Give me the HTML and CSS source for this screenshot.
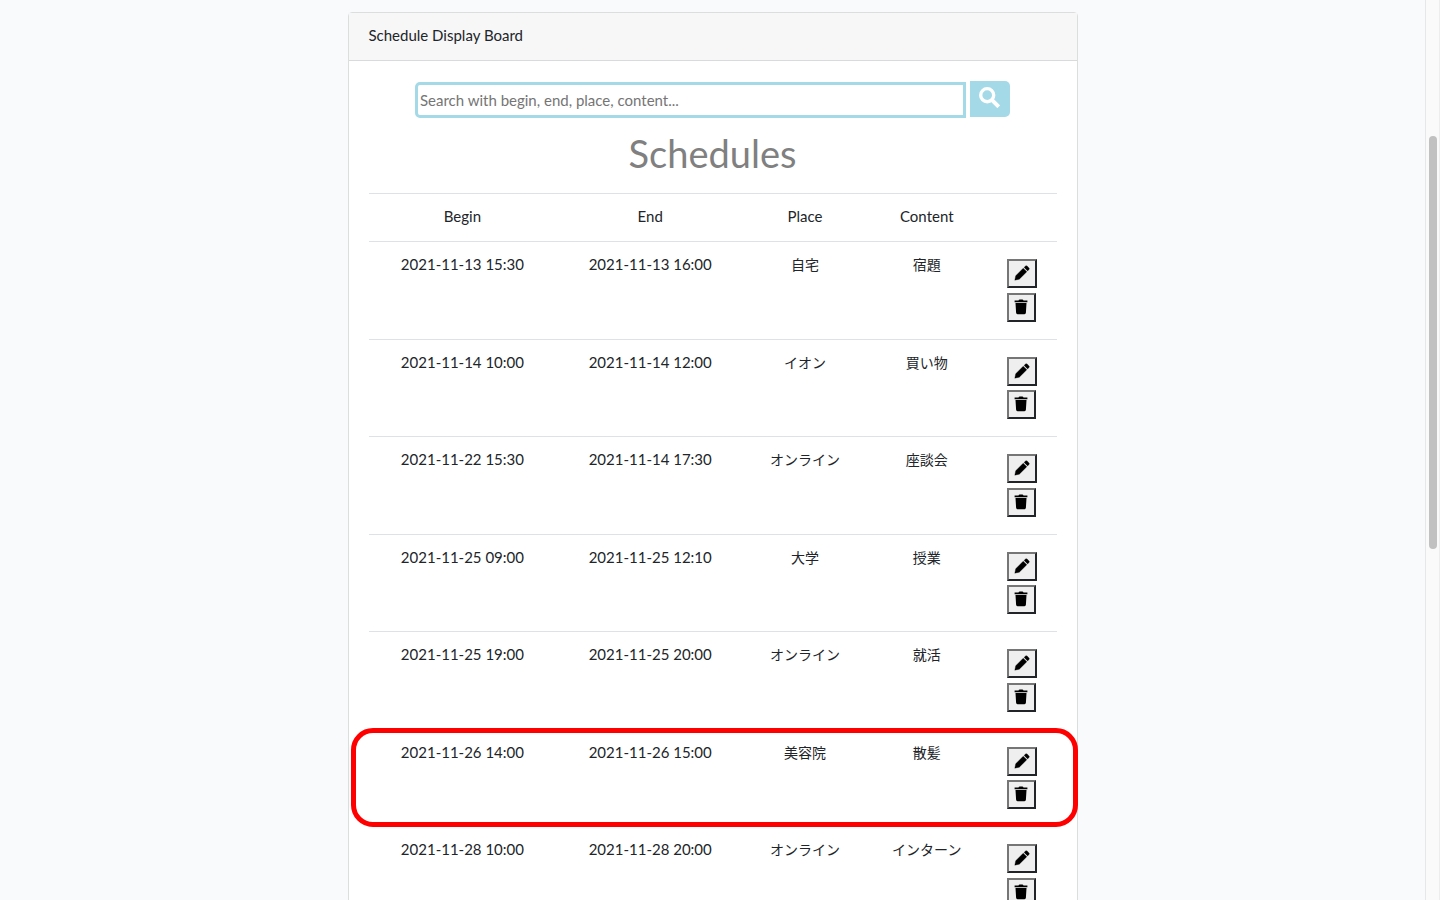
FILE: index.html
```html
<!DOCTYPE html>
<html lang="en">
<head>
<meta charset="utf-8">
<title>Schedule Display Board</title>
<link rel="stylesheet" href="styles.css">
</head>
<body>
<svg class="symbols" aria-hidden="true">
  <symbol id="pencil" viewBox="0 0 16 16"><path d="M.8 15.200 1.700 10.700 9.200 3.200 12.800 6.800 5.300 14.200Z M10.100 2.400 11.500 1Q12.300.300 13.100 1L15 2.900Q15.700 3.700 15 4.500L13.600 5.900Z" stroke="currentColor" stroke-width=".3" stroke-linejoin="round"/></symbol>
  <symbol id="trash" viewBox="0 0 14 16"><path d="M.6 1.500H4.500Q4.800.400 5.800.400H8.200Q9.200.400 9.500 1.500H13.400V3.200H.6Z M1.500 4.100H12.500L11.900 13.800Q11.800 15.200 10.500 15.200H3.500Q2.200 15.200 2.100 13.800Z"/></symbol>
</svg>
<main class="page">
  <section class="card">
    <header class="card-header">Schedule Display Board</header>
    <div class="card-body">
      <form class="search">
        <input class="search-input" type="text" aria-label="Search schedules" placeholder="Search with begin, end, place, content...">
        <button class="search-button" type="button" aria-label="Search"><svg viewBox="0 0 20 20"><circle cx="7.800" cy="7.800" r="6.200" fill="none" stroke="currentColor" stroke-width="3.200"/><path d="m12.500 12.500 6.300 6.300" stroke="currentColor" stroke-width="3.800"/></svg></button>
      </form>
      <h1 class="title">Schedules</h1>
      <table class="schedules">
        <colgroup><col class="col-date"><col class="col-date"><col class="col-text"><col class="col-text"><col></colgroup>
        <thead><tr><th>Begin</th><th>End</th><th>Place</th><th>Content</th><td></td></tr></thead>
        <tbody>
          <tr><td>2021-11-13 15:30</td><td>2021-11-13 16:00</td><td class="text">自宅</td><td class="text">宿題</td><td class="actions"><div class="buttons"><button class="edit" type="button" aria-label="Edit"><svg><use href="#pencil"/></svg></button><button class="delete" type="button" aria-label="Delete"><svg><use href="#trash"/></svg></button></div></td></tr>
          <tr><td>2021-11-14 10:00</td><td>2021-11-14 12:00</td><td class="text">イオン</td><td class="text">買い物</td><td class="actions"><div class="buttons"><button class="edit" type="button" aria-label="Edit"><svg><use href="#pencil"/></svg></button><button class="delete" type="button" aria-label="Delete"><svg><use href="#trash"/></svg></button></div></td></tr>
          <tr><td>2021-11-22 15:30</td><td>2021-11-14 17:30</td><td class="text">オンライン</td><td class="text">座談会</td><td class="actions"><div class="buttons"><button class="edit" type="button" aria-label="Edit"><svg><use href="#pencil"/></svg></button><button class="delete" type="button" aria-label="Delete"><svg><use href="#trash"/></svg></button></div></td></tr>
          <tr><td>2021-11-25 09:00</td><td>2021-11-25 12:10</td><td class="text">大学</td><td class="text">授業</td><td class="actions"><div class="buttons"><button class="edit" type="button" aria-label="Edit"><svg><use href="#pencil"/></svg></button><button class="delete" type="button" aria-label="Delete"><svg><use href="#trash"/></svg></button></div></td></tr>
          <tr><td>2021-11-25 19:00</td><td>2021-11-25 20:00</td><td class="text">オンライン</td><td class="text">就活</td><td class="actions"><div class="buttons"><button class="edit" type="button" aria-label="Edit"><svg><use href="#pencil"/></svg></button><button class="delete" type="button" aria-label="Delete"><svg><use href="#trash"/></svg></button></div></td></tr>
          <tr class="marked"><td>2021-11-26 14:00<span class="marker"></span></td><td>2021-11-26 15:00</td><td class="text">美容院</td><td class="text">散髪</td><td class="actions"><div class="buttons"><button class="edit" type="button" aria-label="Edit"><svg><use href="#pencil"/></svg></button><button class="delete" type="button" aria-label="Delete"><svg><use href="#trash"/></svg></button></div></td></tr>
          <tr><td>2021-11-28 10:00</td><td>2021-11-28 20:00</td><td class="text">オンライン</td><td class="text">インターン</td><td class="actions"><div class="buttons"><button class="edit" type="button" aria-label="Edit"><svg><use href="#pencil"/></svg></button><button class="delete" type="button" aria-label="Delete"><svg><use href="#trash"/></svg></button></div></td></tr>
        </tbody>
      </table>
    </div>
  </section>
</main>
<div class="scrollbar" aria-hidden="true"><div class="thumb"></div></div>
</body>
</html>
```
FILE: styles.css
```css
* { box-sizing: border-box; }
body {
  margin: 0;
  height: 100vh;
  overflow: hidden;
  display: grid;
  grid-template-columns: 1fr 15px;
  background: #f8fafc;
  color: #212529;
  font: 15px/21px Lato, "Noto Sans CJK JP", sans-serif;
}
.symbols { display: none; }
.page { min-width: 0; height: 100vh; overflow: hidden; padding-top: 12px; }
.card {
  max-width: 730px;
  margin: 0 auto;
  background: #fff;
  border: 1px solid #dbdddf;
  border-radius: 4px;
}
.card-header {
  padding: 12px 20px 14px;
  background: #f7f7f7;
  border-bottom: 1px solid #d8dadb;
}
.card-body { padding: 20px; }
.search {
  display: flex;
  gap: 4px;
  width: 595px;
  max-width: 100%;
  margin: 0 auto;
}
.search-input {
  flex: 1;
  min-width: 0;
  height: 36px;
  margin-top: 1px;
  padding: 0 2px;
  border: 3px solid #a4d9e8;
  border-radius: 5px 0 0 5px;
  background: #fff;
  font: inherit;
}
.search-input::placeholder { color: #757575; }
.search-button {
  display: grid;
  justify-content: center;
  align-content: start;
  padding: 6px 2px 0 0;
  width: 40px;
  height: 36px;
  border: 0;
  border-radius: 0 5px 5px 0;
  background: #a4d9e8;
  color: #fff;
}
.search-button svg { width: 21px; height: 21px; }
.title {
  margin: 14px 0 18px;
  color: #808080;
  text-align: center;
  font-size: 38px;
  font-weight: 400;
  line-height: 43px;
}
.schedules {
  width: 100%;
  border-collapse: separate;
  border-spacing: 0;
  table-layout: fixed;
  text-align: center;
}
.col-date { width: 27.3%; }
.col-text { width: 17.7%; }
.schedules th, .schedules td {
  padding: 12px 0 14px;
  border-top: 1px solid #dee2e6;
  font-weight: 400;
  vertical-align: top;
}
.schedules .text { font-size: 14px; }
.schedules tbody tr { height: 98px; }
.schedules tbody tr:nth-child(even) { height: 97px; }
.schedules .actions { padding: 17px 19px; }
.buttons { display: flex; flex-direction: column; gap: 5px; }
tr:nth-child(even) .buttons { gap: 4px; }
.buttons button {
  display: grid;
  justify-content: center;
  height: 29px;
  padding: 4px 0 0;
  border: 2px solid;
  border-color: #767676 #212529 #212529 #767676;
  border-radius: 0;
  background: #efefef;
  color: #000;
}
.buttons svg { width: 16px; height: 16px; fill: currentColor; }
.buttons .edit { width: 30px; }
.buttons .delete { width: 29px; }
.marked { position: relative; }
.marker {
  position: absolute;
  inset: -1px -21px -1px -18px;
  border: 5px solid #f00;
  border-radius: 22px;
  pointer-events: none;
}
.scrollbar {
  padding: 136px 2px 0 3px;
  border-left: 1px solid #e5e7e9;
  border-right: 1px solid #ededed;
  background: #fafafa;
}
.thumb { height: 413px; border-radius: 4px; background: #c1c1c1; }
```
